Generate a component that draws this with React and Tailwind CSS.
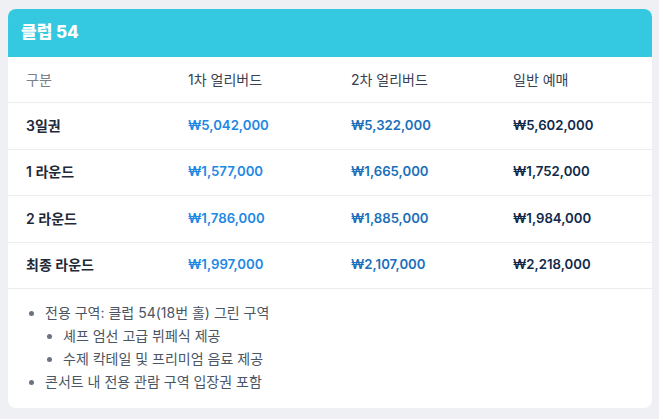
import React from 'react';

const rows = [
  { label: '3일권', early1: '₩5,042,000', early2: '₩5,322,000', general: '₩5,602,000' },
  { label: '1 라운드', early1: '₩1,577,000', early2: '₩1,665,000', general: '₩1,752,000' },
  { label: '2 라운드', early1: '₩1,786,000', early2: '₩1,885,000', general: '₩1,984,000' },
  { label: '최종 라운드', early1: '₩1,997,000', early2: '₩2,107,000', general: '₩2,218,000' },
];

const App = () => {
  return (
    <div
      className="min-h-[419px] bg-[#eef0f3] pt-[9px] pl-2 pr-[7px]"
      style={{ fontFamily: 'Inter, "Noto Sans CJK KR", sans-serif' }}
    >
      <div className="bg-white rounded-lg overflow-hidden">
        <div className="h-12 bg-[#34c9e0] flex items-center px-[13px]">
          <h2 className="text-[17px] font-extrabold text-white">클럽 54</h2>
        </div>

        <div className="grid grid-cols-[162px_163px_162px_1fr] h-[46px] items-center px-[18px] border-b border-[#eaecef] text-sm">
          <span className="text-[#7b8089]">구분</span>
          <span className="text-[#374151]">1차 얼리버드</span>
          <span className="text-[#374151]">2차 얼리버드</span>
          <span className="text-[#374151]">일반 예매</span>
        </div>

        {rows.map((row) => (
          <div
            key={row.label}
            className="grid grid-cols-[162px_163px_162px_1fr] h-[46.5px] items-center px-[18px] border-b border-[#eaecef] text-[13.2px] font-semibold"
          >
            <span className="text-sm text-[#1f2937]">{row.label}</span>
            <span className="text-[#1e88e5]">{row.early1}</span>
            <span className="text-[#1b6fba]">{row.early2}</span>
            <span className="text-[#10294a]">{row.general}</span>
          </div>
        ))}

        <ul className="list-disc pl-[37px] pt-3 pb-[15px] text-sm leading-[1.65] text-[#4b5563] marker:text-[#6b7280]">
          <li>
            전용 구역: 클럽 54(18번 홀) 그린 구역
            <ul className="list-disc pl-[18px]">
              <li>셰프 엄선 고급 뷔페식 제공</li>
              <li>수제 칵테일 및 프리미엄 음료 제공</li>
            </ul>
          </li>
          <li>콘서트 내 전용 관람 구역 입장권 포함</li>
        </ul>
      </div>
    </div>
  );
};

export default App;
